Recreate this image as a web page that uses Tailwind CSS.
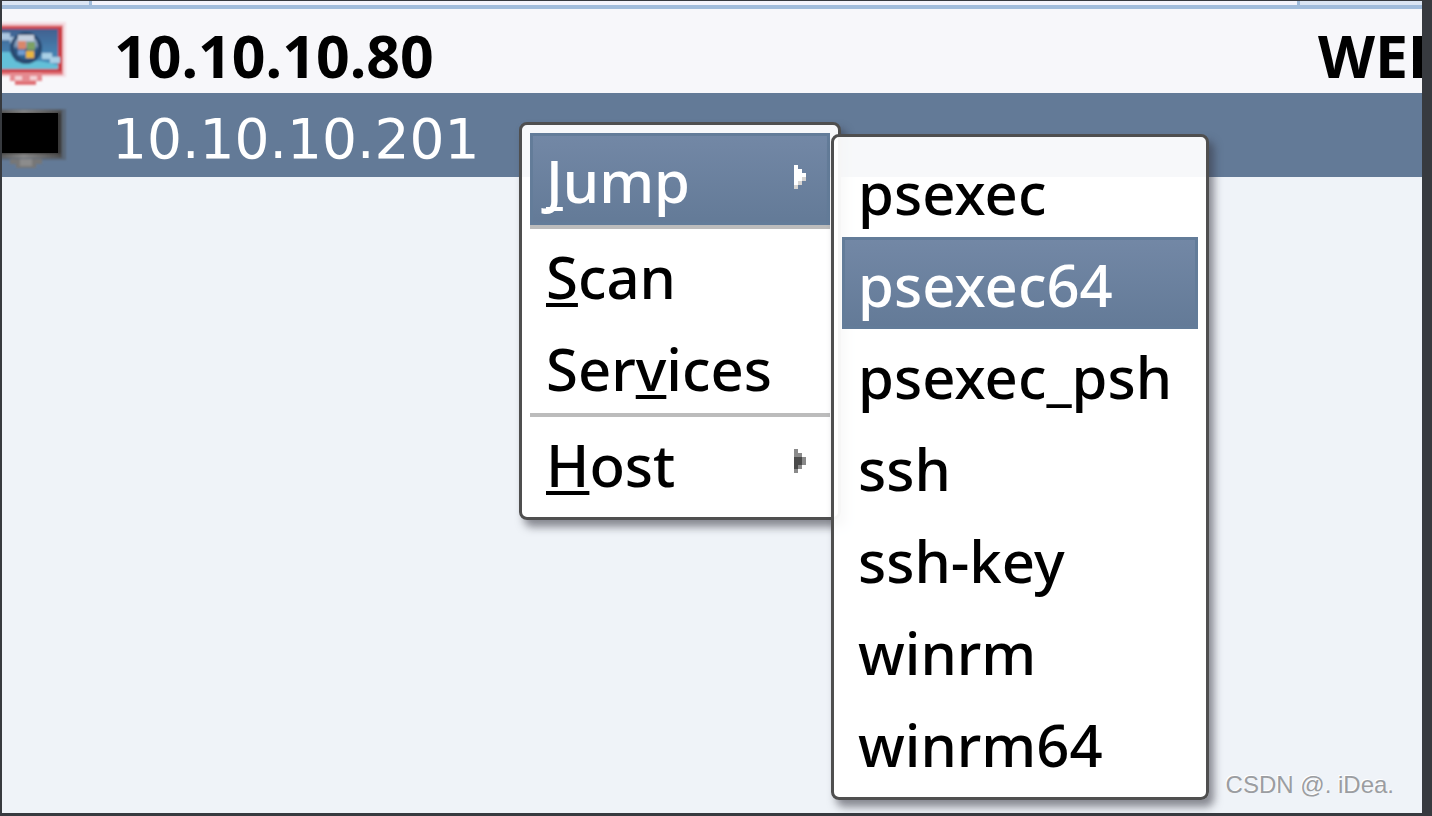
<!DOCTYPE html>
<html lang="en">
<head>
<meta charset="utf-8">
<title>Targets</title>
<script src="https://cdn.jsdelivr.net/npm/@tailwindcss/browser@4"></script>
</head>
<body class="h-screen overflow-hidden bg-[#373a3f] pt-px pr-2.5 pb-[3px] pl-0.5 font-['Noto_Sans',sans-serif] text-black">
<main class="relative h-full overflow-hidden bg-[#eff3f8]">
  <div class="flex h-2 border-b-4 border-[#a1bcdb]" aria-hidden="true">
    <div class="w-[90px] border-r-3 border-[#a1bcdb] bg-[#dbe5f3]"></div>
    <div class="flex-1 border-r-3 border-[#a1bcdb] bg-[#f3f3fb]"></div>
    <div class="w-[122px] bg-[#dbe5f3]"></div>
  </div>
  <table class="w-full table-fixed border-collapse whitespace-nowrap">
    <colgroup><col class="w-[98px]"><col><col class="w-[122px]"></colgroup>
    <tbody>
      <tr class="h-[84px] bg-[#f7f7fa] text-[59px] leading-[76px] font-bold">
        <td class="p-0">
          <svg class="block" width="68" height="84" viewBox="0 0 68 84" role="img" aria-label="Windows host">
            <defs>
              <linearGradient id="sky" x1="0" y1="0" x2="0" y2="1"><stop offset="0" stop-color="#41608f"/><stop offset=".55" stop-color="#457fae"/><stop offset="1" stop-color="#4a94c0"/></linearGradient>
              <linearGradient id="orb" x1="0" y1="0" x2="0" y2="1"><stop offset="0" stop-color="#9fb3ca"/><stop offset=".45" stop-color="#7f9ab8"/><stop offset=".6" stop-color="#2c5480"/><stop offset="1" stop-color="#2f6d9b"/></linearGradient>
              <filter id="soft" x="-10%" y="-10%" width="120%" height="120%"><feGaussianBlur stdDeviation="1.2"/></filter>
            </defs>
            <g filter="url(#soft)">
              <path fill="#f4dde2" d="M-4 13H64V68H-4z"/>
              <path fill="#e3777d" d="M-4 16H61V66H-4z"/>
              <path fill="#c93b42" d="M-4 18H60V63H-4z"/>
              <path fill="url(#sky)" d="M-4 20H56V60H-4z"/>
              <path fill="#63c0d8" d="M-4 43H8L14 53 38 52 56 56V60H-4z"/>
              <path fill="#a9c5df" d="M-4 24H8V28H14V34H8V31H-4z"/>
              <path fill="#a9d0e6" d="M40 44H50V48H58V54H48V50H40z"/>
              <circle cx="24" cy="39" r="16" fill="#2a4a70"/>
              <circle cx="24" cy="38" r="12" fill="url(#orb)"/>
              <path fill="#c4cfde" d="M16 26H32V32H16z"/>
              <path fill="#d9876b" d="M16 32H24V40H16z"/>
              <path fill="#7da163" d="M25 33H33V41H25z"/>
              <path fill="#6f9bd0" d="M16 41H23V46H16z"/>
              <path fill="#e9b63f" d="M24 42H32V49H24z"/>
              <path fill="#e58a90" d="M8 64H40V72H34V76H13V72H8z"/>
              <path fill="#f4d4d8" d="M13 67H20V71H13zM28 67H35V71H28z"/>
              <path fill="#dd6066" d="M13 73H34V75H13z"/>
            </g>
          </svg>
        </td>
        <td class="p-0 pt-2 pl-3.5">10.10.10.80</td>
        <td class="overflow-hidden p-0 pt-2 pl-[18px]">WEB</td>
      </tr>
      <tr class="h-[84px] bg-[#637a97] text-[55px] leading-[76px] text-white">
        <td class="p-0">
          <svg class="block" width="68" height="84" viewBox="0 0 68 84" role="img" aria-label="Unknown host">
            <defs><linearGradient id="edge" x1="0" y1="0" x2="1" y2="0"><stop offset="0" stop-color="#555"/><stop offset=".4" stop-color="#888"/><stop offset="1" stop-color="#4c4c4c"/></linearGradient></defs>
            <g filter="url(#soft)">
              <path fill="#5a6878" d="M-4 16H64V67H-4z"/>
              <path fill="url(#edge)" d="M-4 17H60V65H-4z"/>
              <path fill="#383838" d="M-4 20H59V61H-4z"/>
              <path fill="#777" d="M8 66H40V71H34V75H14V71H8z"/>
              <path fill="#8c8c8c" d="M18 66H30V73H18z"/>
            </g>
            <path d="M0 20H56V60H0z"/>
          </svg>
        </td>
        <td class="p-0 pt-2 pl-3 font-['DejaVu_Sans',sans-serif]">10.10.10.201</td>
        <td class="p-0"></td>
      </tr>
    </tbody>
  </table>

  <ul role="menu" class="absolute top-[121px] left-[517px] w-[322px] rounded-lg border-3 border-[#4f4f4f] bg-white/95 p-2 text-[58px] leading-[88px] font-medium shadow-[5px_7px_8px_rgba(50,50,60,0.55)]">
    <li class="border-b-4 border-[#bcbcbc]">
      <button role="menuitem" class="flex w-full justify-between bg-linear-to-b from-[#7388a6] to-[#637a97] pt-1 pr-6 pl-4 text-white shadow-[inset_0_0_0_3px_#637c99]"><span><span class="underline decoration-4 underline-offset-4 [text-decoration-skip-ink:none]">J</span>ump</span>
        <svg class="mt-7" width="12" height="24" viewBox="0 0 12 24" aria-hidden="true"><path fill="#fff" d="M0 0H4V4H8V8H12V12H8V16H4V20H0z"/><path fill="#d5d3d0" d="M8 12H12V16H8V20H4V24H0V20H4V16H8z"/></svg>
      </button>
    </li>
    <li><button role="menuitem" class="block w-full px-4 pt-1 text-left"><span class="underline decoration-4 underline-offset-4 [text-decoration-skip-ink:none]">S</span>can</button></li>
    <li class="border-b-4 border-[#bcbcbc]"><button role="menuitem" class="block w-full px-4 pt-1 text-left">Ser<span class="underline decoration-4 underline-offset-4 [text-decoration-skip-ink:none]">v</span>ices</button></li>
    <li>
      <button role="menuitem" class="flex w-full justify-between pt-1 pr-6 pl-4"><span><span class="underline decoration-4 underline-offset-4 [text-decoration-skip-ink:none]">H</span>ost</span>
        <svg class="mt-7" width="12" height="24" viewBox="0 0 12 24" aria-hidden="true"><path fill="#8a8a8a" d="M0 0H4V4H8V8H12V16H8V20H4V24H0z"/><path fill="#4a4a4a" d="M0 8H8V16H4V20H0z"/></svg>
      </button>
    </li>
  </ul>

  <ul role="menu" class="absolute top-[133px] left-[829px] w-[378px] rounded-lg border-3 border-[#4f4f4f] bg-white/95 p-2 text-[58px] leading-[88px] font-medium shadow-[5px_7px_8px_rgba(50,50,60,0.55)]">
    <li><button role="menuitem" class="block w-full px-4 pt-1 text-left">psexec</button></li>
    <li><button role="menuitem" class="block w-full bg-linear-to-b from-[#7388a6] to-[#637a97] px-4 pt-1 text-left text-white shadow-[inset_0_0_0_3px_#637c99]">psexec64</button></li>
    <li><button role="menuitem" class="block w-full px-4 pt-1 text-left">psexec_psh</button></li>
    <li><button role="menuitem" class="block w-full px-4 pt-1 text-left">ssh</button></li>
    <li><button role="menuitem" class="block w-full px-4 pt-1 text-left">ssh-key</button></li>
    <li><button role="menuitem" class="block w-full px-4 pt-1 text-left">winrm</button></li>
    <li><button role="menuitem" class="block w-full px-4 pt-1 text-left">winrm64</button></li>
  </ul>

  <p class="absolute right-7 bottom-3 font-['Liberation_Sans',sans-serif] text-2xl text-[#9b9da1] [text-shadow:-1px_-1px_0_#fff]">CSDN @. iDea.</p>
</main>
</body>
</html>
